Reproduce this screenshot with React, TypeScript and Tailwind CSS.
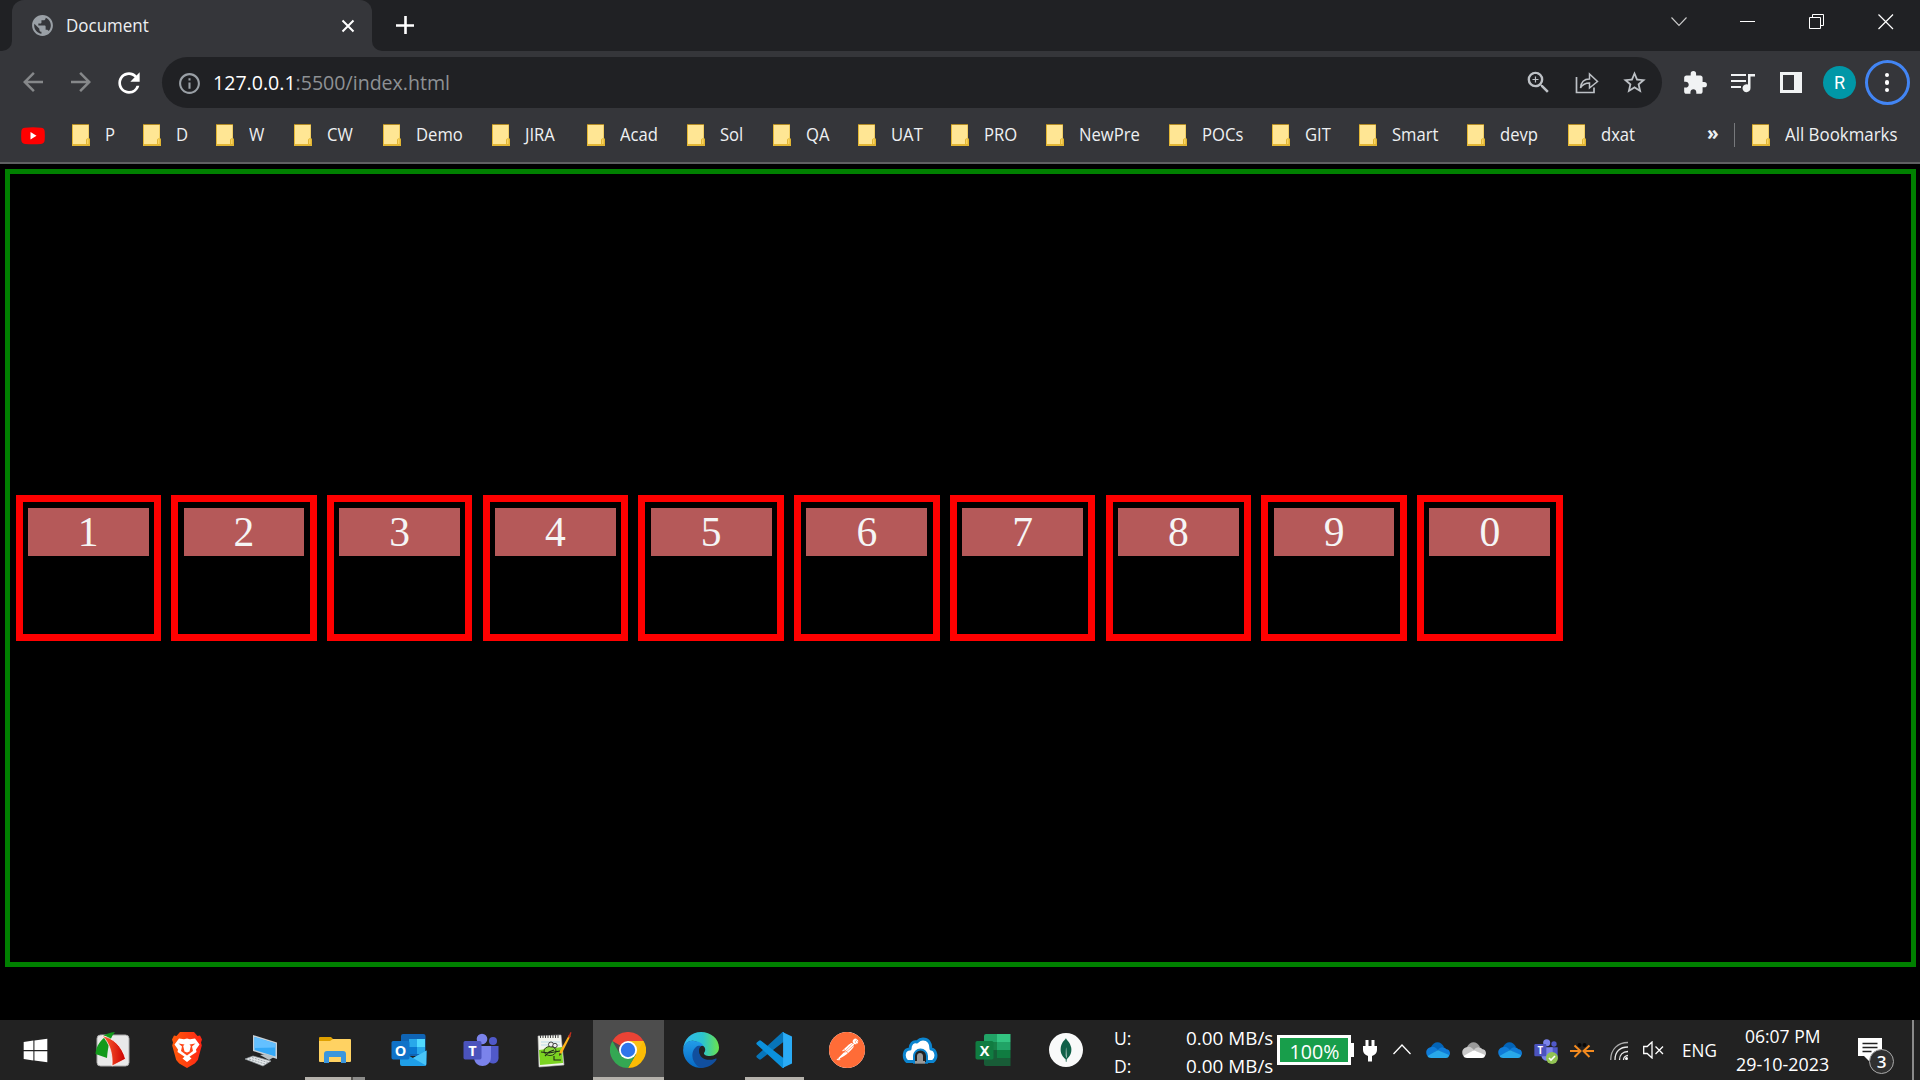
import React from "react";
import { FaWindows } from "react-icons/fa";
import { MdExtension, MdQueueMusic, MdStarBorder, MdRefresh, MdPublic, MdOutlineZoomIn, MdOutlineInfo, MdArrowBack, MdArrowForward } from "react-icons/md";
import { SiBrave, SiPostman, SiMongodb } from "react-icons/si";

const bookmarks = [
  { name: "P", w: "w-[71px]" },
  { name: "D", w: "w-[73px]" },
  { name: "W", w: "w-[78px]" },
  { name: "CW", w: "w-[89px]" },
  { name: "Demo", w: "w-[109px]" },
  { name: "JIRA", w: "w-[95px]" },
  { name: "Acad", w: "w-[100px]" },
  { name: "Sol", w: "w-[86px]" },
  { name: "QA", w: "w-[85px]" },
  { name: "UAT", w: "w-[93px]" },
  { name: "PRO", w: "w-[95px]" },
  { name: "NewPre", w: "w-[123px]" },
  { name: "POCs", w: "w-[103px]" },
  { name: "GIT", w: "w-[87px]" },
  { name: "Smart", w: "w-[108px]" },
  { name: "devp", w: "w-[101px]" },
  { name: "dxat", w: "w-[138px]" },
];

function Label({ children, className = "", scale = "scale-x-[0.95]" }: { children: React.ReactNode; className?: string; scale?: string }) {
  return <span className={`inline-block origin-left whitespace-nowrap ${scale} ${className}`}>{children}</span>;
}

function Folder() {
  return (
    <svg width="18" height="22" viewBox="0 0 18 22" className="shrink-0">
      <path d="M0 0h17v14l1 1v7H0z" fill="#e3b735" />
      <path d="M0 0h17v1H0z" fill="#b08a25" />
      <path d="M1 1h15.500v14l-2 1v4H1z" fill="#ffe694" />
      <path d="M14.500 20v-4.500c0-1 2.500-1 2.500 0v5h-2.500" fill="#fbd55f" stroke="#dcae2c" strokeWidth=".8" />
    </svg>
  );
}

function Bookmark({ name, w, scale }: { name: string; w: string; scale?: string }) {
  return (
    <div className={`flex shrink-0 items-center ${w}`}>
      <Folder />
      <Label className="-mt-[2px] ml-[15px]" scale={scale}>{name}</Label>
    </div>
  );
}

function TabStrip() {
  return (
    <div className="flex h-[51px] bg-[#202124]">
      <div className="flex w-3 items-end bg-[#35363a]">
        <div className="h-full w-full rounded-br-[10px] bg-[#202124]" />
      </div>
      <div className="bg-[#202124]">
        <div className="flex h-[51px] w-[360px] items-center rounded-t-[12px] bg-[#35363a] pl-[17.500px] text-[17.500px] text-[#eef0f2]">
          <MdPublic className="size-[25px] text-[#9aa0a6]" />
          <Label className="ml-[11px] w-[270px]" scale="scale-x-[0.97]">Document</Label>
          <svg width="14" height="14" viewBox="0 0 14 14" stroke="#fff" strokeWidth="2" className="ml-[5.500px]">
            <path d="M1.500 1.500l11 11M12.500 1.500l-11 11" />
          </svg>
        </div>
      </div>
      <div className="w-3 bg-[#35363a]">
        <div className="h-full w-full rounded-bl-[10px] bg-[#202124]" />
      </div>
      <svg width="20" height="20" viewBox="0 0 20 20" stroke="#fff" strokeWidth="2.600" className="ml-[11px] mt-[15px]">
        <path d="M1 10.500h18M10.500 1v18" />
      </svg>
      <div className="ml-auto mr-[26px] flex items-start gap-[53px] pt-[14px]">
        <svg width="16" height="16" viewBox="0 0 16 16" fill="none" stroke="#ccc" strokeWidth="1.100"><path d="M.5 3.500l7.500 8 7.500-8" /></svg>
        <svg width="16" height="16" viewBox="0 0 16 16" fill="none" stroke="#fff"><path d="M0 7.500h15" /></svg>
        <svg width="16" height="16" viewBox="0 0 16 16" fill="none" stroke="#fff"><path d="M.5 3.500h11v11H.5zM3.500 3.500v-3h11v11h-3" /></svg>
        <svg width="16" height="16" viewBox="0 0 16 16" fill="none" stroke="#fff" strokeWidth="1.200"><path d="M.5.500l14.500 14.500M15 .500L.5 15" /></svg>
      </div>
    </div>
  );
}

function Toolbar() {
  return (
    <div className="flex h-[63px] items-center bg-[#35363a]">
      <MdArrowBack className="ml-[18px] size-[30px] -translate-y-px text-[#86888a]" />
      <MdArrowForward className="ml-[18px] size-[30px] -translate-y-px text-[#86888a]" />
      <MdRefresh className="ml-[17px] size-8 text-white" />
      <div className="ml-[17px] flex h-[51px] w-[1500px] items-center rounded-full bg-[#202124] pl-[15px]">
        <MdOutlineInfo className="mt-0.5 size-[25px] text-[#9aa0a6]" />
        <Label className="ml-[11px] text-[20.500px] text-[#8e9194]" scale="scale-x-[0.955]">
          <span className="text-white">127.0.0.1</span>:5500/index.html
        </Label>
        <MdOutlineZoomIn className="ml-auto size-[29px] text-[#bdc1c6]" />
        <svg width="24" height="24" viewBox="0 0 24 24" fill="none" stroke="#bdc1c6" strokeWidth="1.700" className="ml-[22px]">
          <path d="M1.500 6v15.500h17.500v-5" />
          <path d="M5.500 17c.5-6 4-9 9-9V3l8 7.500-8 6.500v-5c-4 0-7 1.500-9 5z" strokeWidth="1.500" />
        </svg>
        <MdStarBorder className="ml-[22px] mr-[14px] size-[27px] text-[#bdc1c6]" />
      </div>
      <MdExtension className="ml-[20px] size-[26px] text-[#f1f3f4]" />
      <svg width="24" height="20" viewBox="0 0 24 20" fill="#f1f3f4" className="ml-[23px]">
        <path d="M0 1h15v2H0zM0 7h15v2H0zM0 13h10v2H0zM17 1h7v2.500h-4.500V15a4 4 0 1 1-2.500-3.500z" />
      </svg>
      <div className="ml-[25px] h-[21px] w-[22px] border-[3px] border-r-8 border-[#f1f3f4]" />
      <div className="ml-[21px] flex size-[33px] items-center justify-center rounded-full bg-[#0097a7] font-[Roboto] text-[18px] text-white">R</div>
      <div className="ml-[9px] flex size-[45px] flex-col items-center justify-center gap-[3px] rounded-full border-[3px] border-[#4285f4] pr-px">
        <i className="size-[4.500px] rounded-full bg-white" />
        <i className="size-[4.500px] rounded-full bg-white" />
        <i className="size-[4.500px] rounded-full bg-white" />
      </div>
    </div>
  );
}

function BookmarkBar() {
  return (
    <div className="flex h-[50px] items-center border-b-2 border-[#5f6062] bg-[#35363a] pb-[6px] pl-[21px] text-[17.500px] text-[#eef0f2]">
      <svg width="24" height="18" viewBox="0 0 24 18" className="mr-[27px] mt-px shrink-0">
        <path d="M4 .7Q12 0 20 .7Q23.500 1 23.700 4.500Q24 9 23.700 13Q23.500 16.500 20 17Q12 17.700 4 17Q.5 16.500.3 13Q0 9 .3 4.500Q.5 1 4 .7z" fill="#f00" />
        <path d="M9.500 5l6 3.700-6 3.700z" fill="#fff" />
      </svg>
      {bookmarks.map((b) => <Bookmark key={b.name} name={b.name} w={b.w} />)}
      <span className="-mt-1 ml-[1px] w-[27px] text-[19px] font-bold">»</span>
      <i className="mr-[17px] h-6 w-px bg-[#77797c]" />
      <Bookmark name="All Bookmarks" w="w-[160px]" scale="scale-x-[0.965]" />
    </div>
  );
}

const digits = ["1", "2", "3", "4", "5", "6", "7", "8", "9", "0"];

function Page() {
  return (
    <div className="h-[856px] bg-black p-[5px] pb-[53px] pr-[4px]">
      <div className="flex h-full items-center gap-[10.350px] border-[5px] border-[#008000] pl-[5.500px]">
        {digits.map((d) => (
          <div key={d} className="h-[146px] w-[145.400px] shrink-0 border-[7px] border-[#ff0000] px-[5.300px] pt-[6px]">
            <div className="h-12 bg-[#b55959] text-center font-['Liberation_Serif',serif] text-[41.600px] leading-[48px] text-[#f5f5f5]">{d}</div>
          </div>
        ))}
      </div>
    </div>
  );
}

function Svg({ children, s = 36 }: { children: React.ReactNode; s?: number }) {
  return <svg width={s} height={s} viewBox="0 0 36 36">{children}</svg>;
}

const FastStone = () => (
  <Svg>
    <defs><linearGradient id="fsr"><stop stopColor="#f63" /><stop offset="1" stopColor="#c00" /></linearGradient></defs>
    <rect x="2" y="3" width="32" height="31" rx="3.500" fill="#e9e9e9" stroke="#aaa" />
    <path d="M8 4C11 2 15 .5 20 0c-5 6-7 14-8 26L.5 22C1 14 6 7 12 4z" fill="#129a1b" />
    <path d="M7 3.500C18 6 27 14 30.500 27L17 34c1-11-2-23-10-30.500z" fill="url(#fsr)" stroke="#fff" strokeWidth=".7" />
  </Svg>
);
const Brave = () => (
  <Svg>
    <defs><linearGradient id="brv"><stop stopColor="#ff5a0a" /><stop offset="1" stopColor="#ff2515" /></linearGradient></defs>
    <path d="M11 0h14l3.500 4 2.500-.5 2 4-1 3 .8 3-4 14.500-3 3.500L18 36l-7.800-4.500-3-3.500-4-14.500.8-3-1-3 2-4 2.500.5z" fill="url(#brv)" />
    <path d="M10 6.500l5 .8L18 6.500l3 .8 5-.8 4.500 6-3.500 5 .5 2.500-6 4-1 .8 2 1.700-4.500 3.500-4.500-3.500 2-1.700-1-.8-6-4L9 17.500l-3.500-5z" fill="#fff" />
    <path d="M9.500 11.500l6 1-1.300 1.500 1.300 5.500 2.500 1 2.500-1 1.300-5.500-1.300-1.500 6-1-3.500 3 1 4.500-6 4.500-6-4.500 1-4.500z" fill="#ff481a" />
    <path d="M16.700 13h2.600v6l-1.300.8-1.300-.8z" fill="#fff" />
  </Svg>
);
const Computer = () => (
  <Svg>
    <path d="M10 3l24 7.500V27L10 19z" fill="#c8d0d6" />
    <path d="M11.500 5L32.500 11.500v13L11.500 18z" fill="#35a9f7" />
    <path d="M11.500 5L32.500 11.500v4L11.500 16z" fill="#64c0ff" />
    <path d="M17 23l6-1 8 3-5 3z" fill="#b7c3c9" />
    <path d="M2 27l8-3 18 5-8 5z" fill="#e4e8ea" stroke="#92999e" strokeWidth=".7" />
    <path d="M6 27l16 5M9 25.500l16 5" stroke="#9ca5aa" strokeDasharray="2 1" />
  </Svg>
);
const Explorer = () => (
  <Svg>
    <path d="M2 6a1 1 0 0 1 1-1h11l2 2v3H2z" fill="#dfa000" />
    <path d="M2 9h11l3-2h17a1 1 0 0 1 1 1v21a1 1 0 0 1-1 1H3a1 1 0 0 1-1-1z" fill="#ffd262" />
    <path d="M7 31V22a3 3 0 0 1 3-3h16a3 3 0 0 1 3 3v9h-5v-6H12v6z" fill="#3a96dd" />
  </Svg>
);
const Outlook = () => (
  <Svg>
    <rect x="10" y="2" width="24.500" height="22" rx="2" fill="#0f64b5" />
    <path d="M18 7h8v8h-8z" fill="#28a8ea" /><path d="M26 7h8v8h-8z" fill="#50d9ff" /><path d="M18 15h8v7h-8z" fill="#0a78d1" /><path d="M26 15h8v7h-8z" fill="#28a8ea" />
    <path d="M9 19l13 7 13.500-7.500V32a2 2 0 0 1-2 2H11a2 2 0 0 1-2-2z" fill="#1f9fe8" />
    <path d="M35.500 18.500L22 26l13 7.500z" fill="#49c5f8" />
    <rect x=".5" y="9" width="18" height="18.500" rx="1.700" fill="#1072c8" />
    <text x="9.500" y="23.500" textAnchor="middle" fontFamily="Open Sans" fontWeight="700" fontSize="14.500" fill="#fff">O</text>
  </Svg>
);
const Teams = ({ s = 36 }: { s?: number }) => (
  <Svg s={s}>
    <circle cx="30" cy="9" r="4" fill="#5059c9" /><path d="M24 14h11.500v11a5 5 0 0 1-11 2z" fill="#5059c9" />
    <circle cx="19" cy="7" r="5.300" fill="#7b83eb" />
    <path d="M11 14h17v11c0 12-17 12-17 0z" fill="#7b83eb" />
    <rect x=".5" y="9" width="18" height="18.500" rx="1.700" fill="#4b53bc" />
    <text x="9.500" y="23.500" textAnchor="middle" fontFamily="Open Sans" fontWeight="700" fontSize="14.500" fill="#fff">T</text>
  </Svg>
);
const Notepad = () => (
  <Svg>
    <path d="M2 4l23-1 3 30-25 2z" fill="#f4f6ef" stroke="#bbb" strokeWidth=".6" />
    <path d="M4 4.500h19" stroke="#444" strokeWidth="3" strokeDasharray="1 1.500" />
    <path d="M5 10h19M5 13h19" stroke="#badbe8" /><path d="M3 18l23-3 1 16-23 2z" fill="#7bd321" />
    <ellipse cx="14" cy="19" rx="6" ry="4.500" fill="#8bd63d" stroke="#263b13" />
    <circle cx="15" cy="12.500" r="2.500" fill="#eee" stroke="#222" strokeWidth=".8" /><circle cx="19" cy="13.500" r="2.200" fill="#eee" stroke="#222" strokeWidth=".8" />
    <path d="M5 20l8 1 11-2M9 24l4-4 5-2M18 24v4h7" fill="none" stroke="#202819" strokeWidth="1.100" />
    <path d="M23 24l1-5 9-16 1.500 1L26 21z" fill="#ffb319" /><path d="M32 5l2.500-5 1 .5L34 6z" fill="#c52d1d" /><path d="M23 24l.5-3 2 1z" fill="#222" />
  </Svg>
);
const Chrome = () => (
  <Svg>
    <path d="M18 18L2.400 9a18 18 0 0 1 31.200 0z" fill="#ea4335" />
    <path d="M18 18L33.600 9A18 18 0 0 1 18 36l7.800-13.500V9z" fill="#fbbc05" />
    <path d="M18 18l7.800 4.500L18 36A18 18 0 0 1 2.400 9l7.800 13.500z" fill="#34a853" />
    <path d="M18 9h15.600L26 22z" fill="#fbc116" />
    <circle cx="18" cy="18" r="9" fill="#fff" /><circle cx="18" cy="18" r="7.200" fill="#2f75eb" />
  </Svg>
);
const Edge = () => (
  <Svg>
    <defs>
      <linearGradient id="ed1"><stop stopColor="#30b8f2" /><stop offset=".55" stopColor="#2cc4cd" /><stop offset="1" stopColor="#6be34b" /></linearGradient>
      <linearGradient id="ed2" x2="0" y2="1"><stop stopColor="#229ce8" /><stop offset="1" stopColor="#0669c5" /></linearGradient>
    </defs>
    <path d="M.2 17C.8 7 8.500 0 18 0c10 0 18 7 18 15.500C36 21 31.500 24 27 24c-4.500 0-6.500-1.500-6-3 2-2 2-7-3-8C11 6 3 8 .2 17z" fill="url(#ed1)" />
    <path d="M.1 18C1 11 6 8 11 9c5 0 9 3 9.500 5-4-1-6.500 3-4.500 8 2 6 7 9 12 9-4 4-8 5-12 4.800C7 35 0 27 .1 18z" fill="url(#ed2)" />
    <path d="M13 15c-7 6-3 18 5 21 7 0 13-4 15.500-8.500.5-1-.5-1.300-1.300-.8C24 30 16 26 16 19c0-2 .5-4 2-5-2-.5-4 0-5 1z" fill="#114f9e" />
  </Svg>
);
const VSCode = () => (
  <Svg>
    <path d="M26.500 0L.8 23.500a1.500 1.500 0 0 0 0 2L3 27.300a1.500 1.500 0 0 0 2 0L28 9.500V0z" fill="#0775b9" />
    <path d="M26.500 36L.8 12.500a1.500 1.500 0 0 1 0-2L3 8.700a1.500 1.500 0 0 1 2 0L28 26.500V36z" fill="#0b91dc" />
    <path d="M26.500 0L36 4.500v27L26.500 36q.6-.5.600-1.500v-33q0-1-.6-1.500z" fill="#2aabf5" />
  </Svg>
);
const CloudTunnel = () => (
  <Svg>
    <path d="M5 29.500h8V24a5 5 0 0 1 10 0v5.500h8c5-4 3-12-2-12.500 0-6-3-10-8-10-4 0-5 2-6 3-4-1-7 2-7 7-7 0-7 9-3 12.500z" fill="#fff" stroke="#0c85d0" strokeWidth="3" strokeLinejoin="round" />
    <path d="M12 31v-7a6.500 6.500 0 0 1 13 0v7z" fill="#222" stroke="#0c85d0" strokeWidth="2" />
    <path d="M13 32v-3h2v-5c0-4 6-4 6 0v5h2v3z" fill="#999" /><path d="M10 32.200h16" stroke="#222" strokeWidth="1" />
  </Svg>
);
const Excel = () => (
  <Svg>
    <path d="M9 4a2 2 0 0 1 2-2h11v8H9z" fill="#21a366" /><path d="M22 2h13.500v8H22z" fill="#33c481" />
    <path d="M9 10h13v8H9z" fill="#178148" /><path d="M22 10h13.500v8H22z" fill="#21a366" />
    <path d="M9 18h13v8H9z" fill="#155f38" /><path d="M22 18h13.500v8H22z" fill="#107c41" />
    <path d="M9 26h26.500v8H11a2 2 0 0 1-2-2z" fill="#185c37" />
    <rect x=".5" y="9" width="18" height="18.500" rx="1.700" fill="#107c41" />
    <text x="9.500" y="23.500" textAnchor="middle" fontFamily="Open Sans" fontWeight="700" fontSize="14.500" fill="#fff">X</text>
  </Svg>
);

const apps: { icon: React.ReactNode; w: string; bar?: string; active?: boolean }[] = [
  { icon: <FaWindows className="size-[27px] text-white" />, w: "w-[73px]" },
  { icon: <FastStone />, w: "w-[81px]" },
  { icon: <Brave />, w: "w-[67px]" },
  { icon: <Computer />, w: "w-[79px]" },
  { icon: <Explorer />, w: "w-[70px]", bar: "w-[60px]" },
  { icon: <Outlook />, w: "w-[77px]" },
  { icon: <Teams />, w: "w-[70px]" },
  { icon: <Notepad />, w: "w-[76px]" },
  { icon: <Chrome />, w: "w-[71px]", active: true, bar: "w-[71px]" },
  { icon: <Edge />, w: "w-[75px]" },
  { icon: <VSCode />, w: "w-[71px]", bar: "w-[59px]" },
  { icon: <div className="flex size-9 items-center justify-center rounded-full bg-white"><SiPostman className="size-9 text-[#ff6c37]" /></div>, w: "w-[75px]" },
  { icon: <CloudTunnel />, w: "w-[71px]" },
  { icon: <Excel />, w: "w-[75px]" },
  { icon: <div className="flex size-[34px] items-center justify-center rounded-full bg-[#f9fafa]"><SiMongodb className="size-6 text-[#116149]" /></div>, w: "w-[71px]" },
];

function Cloud({ a, b, c }: { a: string; b: string; c: string }) {
  return (
    <svg width="24" height="16" viewBox="0 0 24 16" className="mr-3 shrink-0">
      <path d="M5 5C8-1.500 15-1.500 18 5l-3 4-9-2z" fill={a} />
      <path d="M5.500 5C8 4 10 6 12 8l-9 7C-1 13-1 6 5.500 5z" fill={b} />
      <path d="M12 8c2-4 7-3 8-1 4 0 5 5 3 7z" fill={b} />
      <path d="M12 8l11 5c0 2-1 3-3 3H5c-2 0-3-1-3.500-2z" fill={c} />
    </svg>
  );
}

function Taskbar() {
  return (
    <div className="flex h-[60px] bg-[#222222] text-white">
      {apps.map((a, i) => (
        <div key={i} className={`relative flex h-[60px] shrink-0 items-center justify-center ${a.w} ${a.active ? "bg-[#4d4d4d]" : ""}`}>
          <div className={i === 3 || i === 4 || i === 5 ? "" : "mr-[2px]"}>{a.icon}</div>
          {a.bar && <i className={`absolute bottom-0 h-[3px] bg-[#b5b2ac] ${a.bar}`} />}
          {i === 4 && <i className="absolute bottom-0 right-[5px] h-[3px] w-[14px] border-l-2 border-[#55534f] bg-[#8c8c8a]" />}
        </div>
      ))}
      <div className="ml-[12px] flex w-[163px] shrink-0 flex-col pt-[4px] text-[18.500px] leading-7">
        <div className="flex"><Label className="w-[72px]">U:</Label><Label scale="scale-x-[1.02]">0.00 MB/s</Label></div>
        <div className="flex"><Label className="w-[72px]">D:</Label><Label scale="scale-x-[1.02]">0.00 MB/s</Label></div>
      </div>
      <div className="mt-[15px] flex h-[30px] w-[77px] shrink-0 items-center">
        <div className="flex h-[30px] w-[74px] items-center justify-center border-[3px] border-white bg-[#189e4b] pt-[3px] text-[20px] leading-none">
          <span className="inline-block scale-x-[0.98]">100%</span>
        </div>
        <i className="h-[14px] w-[3px] bg-white" />
      </div>
      <svg width="14" height="22" viewBox="0 0 14 22" fill="#fff" className="ml-[9px] mt-[20px] shrink-0"><path d="M2.500 0h3v6h3V0h3v6H14v4c0 3-2 5-5 6v5.500H5V16c-3-1-5-3-5-6V6h2.500z" /></svg>
      <svg width="18" height="11" viewBox="0 0 18 11" fill="none" stroke="#fff" strokeWidth="1.300" className="ml-[16px] mr-[15px] mt-[24px] shrink-0"><path d="M.5 10L9 1l8.500 9" /></svg>
      <div className="flex items-center">
        <Cloud a="#0364b8" b="#0f7bd7" c="#28a8ea" />
        <Cloud a="#9a9a9a" b="#c9c9c9" c="#fff" />
        <Cloud a="#0364b8" b="#0f7bd7" c="#28a8ea" />
        <div className="relative mr-3 size-6">
          <Teams s={24} />
          <svg width="12" height="12" viewBox="0 0 12 12" className="absolute -bottom-0.5 right-0"><circle cx="6" cy="6" r="6" fill="#92c353" /><path d="M3 6l2 2 4-4" fill="none" stroke="#fff" strokeWidth="1.600" /></svg>
        </div>
        <svg width="24" height="18" viewBox="0 0 24 18" fill="none" className="mr-[16px]">
          <path d="M0 10h10M14 10h10M4.500 4.500L10.500 10l-6 6M19.500 4.500L13.500 10l6 6" stroke="#f58b1f" strokeWidth="2" />
          <circle cx="9.500" cy="4" r="2" fill="#080808" /><circle cx="14.500" cy="4" r="2" fill="#080808" />
        </svg>
        <svg width="18" height="20" viewBox="0 0 18 20" fill="none" stroke="#e8e8e8" strokeWidth="1.300" className="mr-[15px] mt-[2px]">
          <path d="M.7 19C.7 8 8 1.500 18 1.500" stroke="#aaa" /><path d="M5 19C5 10.500 10 6 18 6" /><path d="M9.500 19c0-5 3-8.500 8.500-8.500M13.500 19c0-2.500 2-4.500 4.500-4.500" />
          <circle cx="16.500" cy="17.500" r="1.500" fill="#fff" stroke="none" />
        </svg>
        <svg width="21" height="18" viewBox="0 0 21 18" fill="none" stroke="#fff" strokeWidth="1.300" className="mr-[18px]">
          <path d="M.7 5.500h3.500L9 1v16l-4.800-4.500H.7zM12.500 5.500l7.500 7.500M20 5.500L12.500 13" />
        </svg>
        <Label className="w-[54px] text-[18px]">ENG</Label>
      </div>
      <div className="w-[96px] shrink-0 pt-[2px] text-[17.500px] leading-7">
        <Label className="ml-[9px]" scale="scale-x-100">06:07 PM</Label>
        <Label scale="scale-x-[1.02]">29-10-2023</Label>
      </div>
      <div className="relative ml-[26px] h-[60px] w-[38px] shrink-0">
        <svg width="24" height="24" viewBox="0 0 24 24" className="mt-[18px]"><path d="M0 0h24v18H16l-5 5-5-5H0z" fill="#fff" /><path d="M4.500 5.500h15M4.500 9.500h15M4.500 13.500h9" stroke="#222" strokeWidth="1.300" /></svg>
        <span className="absolute left-[11px] top-[29px] flex size-[25px] items-center justify-center rounded-full border border-[#aaa] bg-[#303030] text-[17px] font-semibold">3</span>
      </div>
      <i className="ml-auto mr-[6px] h-full w-[2px] bg-[#8a8a8a]" />
    </div>
  );
}

export default function App() {
  return (
    <div className="h-[1080px] w-[1920px] overflow-hidden bg-black font-['Open_Sans',sans-serif]">
      <TabStrip />
      <Toolbar />
      <BookmarkBar />
      <Page />
      <Taskbar />
    </div>
  );
}
